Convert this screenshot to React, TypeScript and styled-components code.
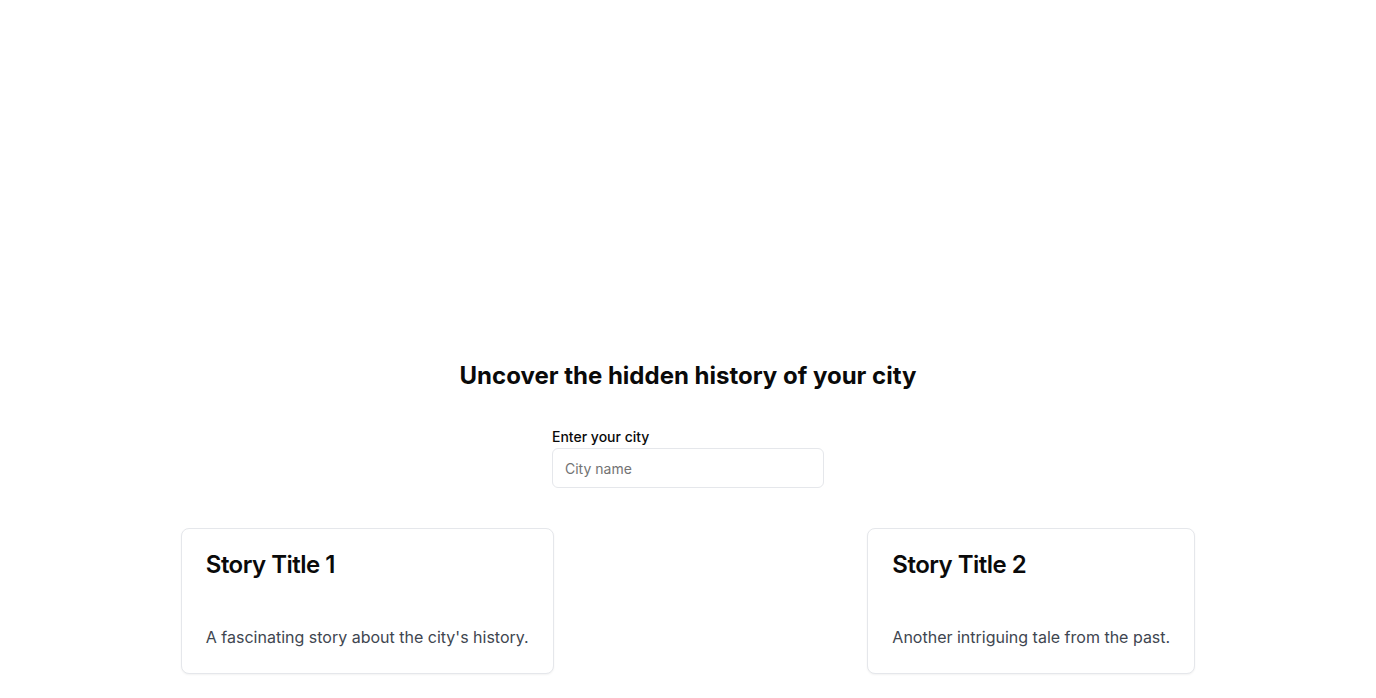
import React from 'react';
import styled, { createGlobalStyle } from 'styled-components';

const GlobalStyle = createGlobalStyle`
  * { box-sizing: border-box; }
  body {
    margin: 0;
    background: #ffffff;
    font-family: Inter, "Noto Sans", sans-serif;
    color: #0a0a0a;
  }
`;

const stories = [
  { id: 1, title: 'Story Title 1', text: "A fascinating story about the city's history." },
  { id: 2, title: 'Story Title 2', text: 'Another intriguing tale from the past.' },
];

const Page = () => (
  <Main>
    <Hero />
    <Heading>Uncover the hidden history of your city</Heading>
    <Field>
      <Label htmlFor="city">Enter your city</Label>
      <Input id="city" placeholder="City name" />
    </Field>
    <StoryRow>
      {stories.map((s) => (
        <Card key={s.id}>
          <CardHeader>
            <CardTitle>{s.title}</CardTitle>
          </CardHeader>
          <CardContent>
            <CardText>{s.text}</CardText>
          </CardContent>
        </Card>
      ))}
    </StoryRow>
  </Main>
);

export default function App() {
  return (
    <>
      <GlobalStyle />
      <Page />
    </>
  );
}

const Main = styled.main`
  display: flex;
  flex-direction: column;
  align-items: center;
  padding: 0 24px;
  min-height: 698px;
`;

const Hero = styled.div`
  width: 100%;
  height: 360px;
`;

const Heading = styled.h1`
  margin: 0 0 35px;
  font-size: 24px;
  line-height: 32px;
  font-weight: 700;
  text-align: center;
`;

const Field = styled.div`
  width: 272px;
  display: flex;
  flex-direction: column;
  gap: 1px;
`;

const Label = styled.label`
  font-size: 14px;
  line-height: 20px;
  font-weight: 500;
  color: #0a0a0a;
`;

const Input = styled.input`
  height: 40px;
  width: 100%;
  padding: 8px 12px;
  border: 1px solid #e5e7eb;
  border-radius: 6px;
  background: #ffffff;
  font-family: Inter, "Noto Sans", sans-serif;
  font-size: 14px;
  color: #0a0a0a;
  outline: none;
  &::placeholder {
    color: #737373;
  }
`;

const StoryRow = styled.section`
  width: 100%;
  margin-top: 40px;
  display: flex;
  justify-content: space-around;
  align-items: flex-start;
`;

const Card = styled.article`
  border: 1px solid #e5e7eb;
  border-radius: 8px;
  background: #ffffff;
  box-shadow: 0 1px 2px rgba(0, 0, 0, 0.05);
`;

const CardHeader = styled.div`
  padding: 24px;
`;

const CardTitle = styled.h3`
  margin: 0;
  font-size: 24px;
  line-height: 24px;
  font-weight: 600;
  letter-spacing: -0.022em;
`;

const CardContent = styled.div`
  padding: 24px;
`;

const CardText = styled.p`
  margin: 0;
  font-size: 16px;
  line-height: 24px;
  color: #404650;
`;
